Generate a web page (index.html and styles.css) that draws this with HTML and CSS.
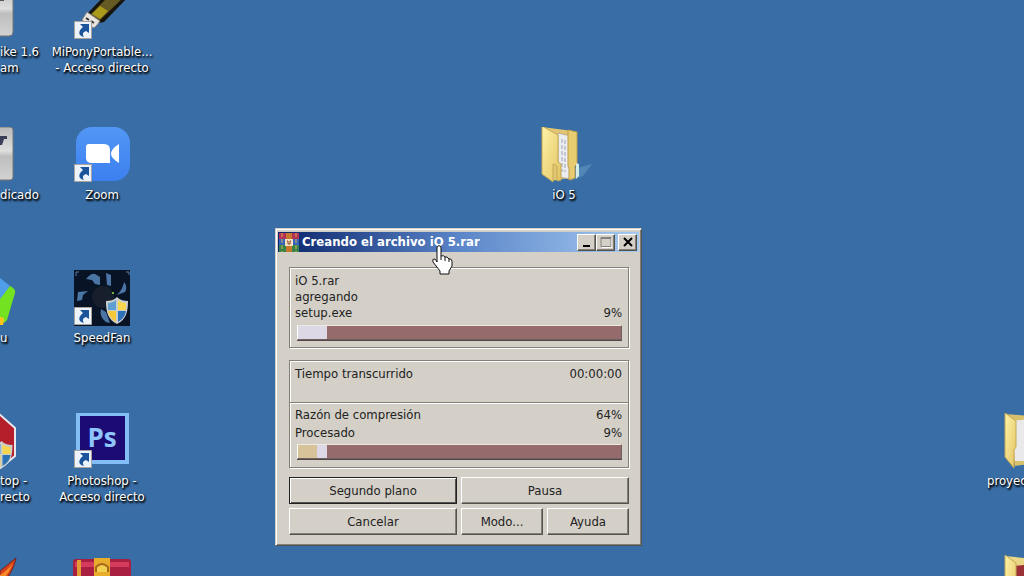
FILE: index.html
```html
<!DOCTYPE html>
<html lang="es">
<head>
    <meta charset="UTF-8">
    <title>Creando el archivo iO 5.rar</title>
    <link rel="stylesheet" href="styles.css">
</head>
<body>
    <svg class="defs" aria-hidden="true">
        <defs>
            <linearGradient id="silver" x1="0" y1="0" x2="0" y2="1">
                <stop offset="0" stop-color="#b9b9b9"/>
                <stop offset="0.45" stop-color="#dedede"/>
                <stop offset="0.55" stop-color="#bebebe"/>
                <stop offset="1" stop-color="#d2d2d2"/>
            </linearGradient>
            <linearGradient id="folder" x1="0" y1="0" x2="1" y2="1">
                <stop offset="0" stop-color="#fff3a8"/>
                <stop offset="1" stop-color="#e2c362"/>
            </linearGradient>
            <linearGradient id="zoom" x1="0" y1="0" x2="0" y2="1">
                <stop offset="0" stop-color="#5397f5"/>
                <stop offset="1" stop-color="#3c7ff0"/>
            </linearGradient>
        </defs>
        <symbol id="shortcut" viewBox="0 0 18 18">
            <path d="M0.5 0.5h17v17h-17z" fill="#edf3fa" stroke="#a9a39b"/>
            <path d="M6 3h9v9l-3-2c-3 1-4 3-2 6C5 15 3 11 9 6z" fill="#1c549b"/>
        </symbol>
        <symbol id="shield" viewBox="0 0 22 27">
            <path d="M11 0c3 3 7 4 11 4c0 11-2 19-11 23C2 23 0 15 0 4c4 0 8-1 11-4z" fill="#c9ced0"/>
            <path d="M10 3v10H2V6c3 0 6-1 8-3z" fill="#5e9ed0"/>
            <path d="M12 3v10h8V6c-3 0-6-1-8-3z" fill="#f7d64f"/>
            <path d="M2 14h8v11c-5-3-7-6-8-11z" fill="#f6c93a"/>
            <path d="M20 14h-8v11c5-3 7-6 8-11z" fill="#2d72b4"/>
        </symbol>
    </svg>

    <main class="desktop">
        <div class="icon edge row-1">
            <svg width="56" height="56" viewBox="0 0 56 56">
                <path d="M0 0h38q4 0 4 4v42q0 4-4 4H0z" transform="translate(-29 2)" fill="url(#silver)" stroke="#777"/>
                <path d="M0 15h4v2H0z" fill="#555"/>
            </svg>
            <span>ike 1.6<br>am</span>
        </div>
        <div class="icon edge row-2">
            <svg width="56" height="56" viewBox="0 0 56 56">
                <path d="M-4 0H10q3 0 3 3v47q0 3-3 3H-4z" fill="url(#silver)" stroke="#777"/>
                <path d="M0 9h7v3H4l-2 6H0z" fill="#3c3d58"/>
            </svg>
            <span>dicado</span>
        </div>
        <div class="icon edge row-3">
            <svg width="56" height="56" viewBox="0 0 56 56">
                <path d="M0 8l10 8L0 30z" fill="#4e9eea"/>
                <path d="M10 16q6 3 5 7L7 50q-2 3-7 4V29z" fill="#73e321"/>
                <path d="M0 47q4 0 4 3l-1 5H0z" fill="#ffc31e"/>
            </svg>
            <span>u</span>
        </div>
        <div class="icon edge row-4">
            <svg width="56" height="56" viewBox="0 0 56 56">
                <path d="M-2 0l17 15v28L-2 57z" fill="#b51f2c" stroke="#e8e8ee" stroke-width="2"/>
                <use href="#shield" x="-10" y="28" width="23" height="27"/>
            </svg>
            <span>top -<br>recto</span>
        </div>
        <div class="icon edge row-5">
            <svg width="56" height="56" viewBox="0 0 56 56">
                <path d="M0 16Q9 9 16 3Q13 18 0 32z" fill="#d9421c" stroke="#752018"/>
                <path d="M0 20Q7 16 13 8Q9 19 0 28z" fill="#f78b28"/>
            </svg>
        </div>

        <div class="icon first row-1">
            <svg width="56" height="56" viewBox="0 0 56 56">
                <path d="M12 31L34 8h22v3L30 38l-5 1z" fill="#17150c"/>
                <path d="M16 31L36 11h16L26 36z" fill="#665a24"/>
                <path d="M18 30l8-8 8 5-8 8z" fill="#a99b19"/>
                <path d="M13 28l13 9-3 4q-2 4-6 2l-9-7z" fill="#e8e5df" stroke="#8a857e"/>
                <path d="M12 34l3 2M17 37l3 2" stroke="#333" stroke-width="2"/>
                <use href="#shortcut" x="0" y="37" width="18" height="18"/>
            </svg>
            <span>MiPonyPortable...<br>- Acceso directo</span>
        </div>
        <div class="icon first row-2">
            <svg width="56" height="56" viewBox="0 0 56 56">
                <rect x="2" y="0" width="54" height="54" rx="16" fill="url(#zoom)"/>
                <path d="M15 17h15q6 0 6 6v13H18q-6 0-6-5V20q0-3 3-3z" fill="#fff"/>
                <path d="M45 17v19q-8-5-8-9 0-5 8-10z" fill="#fff"/>
                <use href="#shortcut" x="0" y="37" width="18" height="18"/>
            </svg>
            <span>Zoom</span>
        </div>
        <div class="icon first row-3">
            <svg width="56" height="56" viewBox="0 0 56 56">
                <path d="M0 0h56v56H0z" fill="#091326"/>
                <path d="M12 9q5-6 9-5l5 3v8l-5-1-3-4zM32 3l5 2v11l-4-1zM50 12q4 5 1 10l-8 3q6-6 7-13zM4 22l10-1-5 4-1 5-5 1zM27 39q-2 8 5 13l4 1-4-11z" fill="#4b75a5"/>
                <path d="M2 6V2h3M52 2h3v3" fill="none" stroke="#587b9e"/>
                <circle cx="29" cy="27" r="11" fill="#171e2c"/>
                <circle cx="39" cy="23" r="1" fill="#9ae142"/>
                <use href="#shortcut" x="0" y="37" width="18" height="18"/>
                <use href="#shield" x="32" y="27" width="22" height="27"/>
            </svg>
            <span>SpeedFan</span>
        </div>
        <div class="icon first row-4">
            <svg width="56" height="56" viewBox="0 0 56 56">
                <path d="M4 1h49v48H4z" fill="#1b0b72" stroke="#82bdf5" stroke-width="4"/>
                <text x="28" y="34" class="ps">Ps</text>
                <use href="#shortcut" x="0" y="37" width="18" height="18"/>
            </svg>
            <span>Photoshop -<br>Acceso directo</span>
        </div>
        <div class="icon first row-5">
            <svg width="58" height="56" viewBox="0 0 58 56">
                <rect x="0" y="4" width="58" height="22" rx="3" fill="#a91f42"/>
                <path d="M2 7h54v5H2z" fill="#d43b5c"/>
                <path d="M4 5h4v18H4z" fill="#e49b36"/>
                <path d="M21 3h16v23H21z" fill="#e7ad2b"/>
                <path d="M23 17V12q6-6 12 0v5" fill="#f4ce4e" stroke="#a9691b" stroke-width="2"/>
            </svg>
        </div>

        <div class="icon middle row-2">
            <svg width="56" height="56" viewBox="0 0 56 56">
                <path d="M33 43l23-6-9 12-13 5z" fill="#6aa1c6" opacity="0.5"/>
                <path d="M6 0l31 4v46l-22 4z" fill="#e3c673"/>
                <path d="M22 6l13 3v43l-13-2z" fill="#ebecef" stroke="#bcae83"/>
                <path d="M26 12v33M29 13v32" stroke="#9fa4b5" stroke-dasharray="4 2"/>
                <path d="M32 3l9 2v32l-2 2v12l-6 2V41l-1-2z" fill="#e8cd70" stroke="#ba9b4c"/>
                <path d="M40 36l3 1v12l-3 3z" fill="#d4ece9"/>
                <path d="M6-1l16 9v27l3 2v16l-4 1V39l-4-2v18L6 47z" fill="url(#folder)" stroke="#c6a954"/>
            </svg>
            <span>iO 5</span>
        </div>
        <div class="icon last row-4">
            <svg width="56" height="56" viewBox="0 0 56 56">
                <path d="M18 1l38 3v45L28 53z" fill="#d9c06c"/>
                <path d="M25 8l31-3v43H28z" fill="#e9e9eb"/>
                <path d="M18 0l11 8v26l-2 3v18L18 44z" fill="url(#folder)" stroke="#c6a954"/>
            </svg>
            <span>proyec</span>
        </div>
        <div class="icon last row-5">
            <svg width="56" height="56" viewBox="0 0 56 56">
                <path d="M18 1l38 4v45L28 53z" fill="#ead786"/>
                <path d="M26 11l30-3v43H28z" fill="#9c3037"/>
                <path d="M18 0l11 8v26l-2 3v18L18 44z" fill="url(#folder)" stroke="#c6a954"/>
            </svg>
        </div>

        <section class="window">
            <header class="titlebar">
                <svg width="20" height="19" viewBox="0 0 20 19">
                    <path d="M0 0h20v6H0z" fill="#b42f58"/>
                    <path d="M0 6h20v6H0z" fill="#3564bc"/>
                    <path d="M0 12h20v7H0z" fill="#37844b"/>
                    <path d="M3 0v19M17 0v19" stroke="#d9b44d" stroke-dasharray="4 2"/>
                    <path d="M7 0h6v19H7z" fill="#c5772b"/>
                    <path d="M6 6h8v7H6z" fill="#f4dfc1"/>
                    <path d="M8 8h1v3h2V8h1" fill="none" stroke="#884722"/>
                </svg>
                <h1>Creando el archivo iO 5.rar</h1>
                <div class="window-buttons">
                    <button aria-label="Minimizar"><svg width="12" height="12"><path d="M2 9h7v2H2z"/></svg></button>
                    <button aria-label="Maximizar" disabled><svg width="12" height="12"><path d="M1 1.5h10v9H1zM1 2.5h10" fill="none" stroke="#85827d"/><path d="M2 11.5h10V2" fill="none" stroke="#fff"/></svg></button>
                    <button aria-label="Cerrar"><svg width="12" height="12"><path d="M2 2l8 8M10 2l-8 8" stroke="#000" stroke-width="2"/></svg></button>
                </div>
            </header>

            <div class="content">
                <div class="group">
                    <p>iO 5.rar</p>
                    <p>agregando</p>
                    <p class="line"><span>setup.exe</span><span>9%</span></p>
                    <div class="bar" role="progressbar" aria-label="setup.exe" aria-valuenow="9">
                        <span class="done" style="width: 9%"></span>
                    </div>
                </div>

                <div class="group totals">
                    <div class="time">
                        <p class="line"><span>Tiempo transcurrido</span><span>00:00:00</span></p>
                    </div>
                    <div class="ratio">
                        <p class="line"><span>Razón de compresión</span><span>64%</span></p>
                        <p class="line"><span>Procesado</span><span>9%</span></p>
                        <div class="bar" role="progressbar" aria-label="Procesado" aria-valuenow="9">
                            <span class="packed" style="width: 6%"></span>
                            <span class="done" style="width: 3%"></span>
                        </div>
                    </div>
                </div>

                <div class="actions">
                    <button class="wide default">Segundo plano</button>
                    <button class="wide">Pausa</button>
                    <button class="wide">Cancelar</button>
                    <button>Modo...</button>
                    <button>Ayuda</button>
                </div>
            </div>
        </section>

        <svg class="pointer" width="21" height="30" viewBox="0 0 21 30" aria-hidden="true">
            <path d="M5 2q2-3 4 0v9q3-1 4 1 2-1 4 2 2-1 3 2v5l-3 5v3H8v-3L1 17q-1-3 1-3 2 0 3 3z" fill="#fff" stroke="#111"/>
            <path d="M9 11v4M13 12v4M17 14v3" stroke="#111"/>
        </svg>
    </main>
</body>
</html>
```

FILE: styles.css
```css
body {
    margin: 0;
    font-family: "DejaVu Sans Condensed", "Noto Sans", sans-serif;
    font-size: 13px;
    line-height: 16px;
    color: #222;
}
.defs {
    position: absolute;
    width: 0;
    height: 0;
}
.desktop {
    position: relative;
    height: 100vh;
    overflow: hidden;
    background: #396da5;
}

/* desktop icons */
.icon {
    position: absolute;
    width: 112px;
    display: flex;
    flex-direction: column;
    align-items: center;
    gap: 4px;
    color: #fff;
    text-align: center;
    text-shadow: 1px 1px 2px #000, 1px 2px 2px #000;
    white-space: nowrap;
}
.edge {
    left: 0;
    align-items: flex-start;
    text-align: left;
}
.first { left: 46px; }
.middle { left: 508px; }
.last {
    left: 987px;
    align-items: flex-start;
}
.row-1 { top: -16px; }
.row-2 { top: 127px; }
.row-3 { top: 270px; }
.row-4 { top: 413px; }
.row-5 { top: 555px; }
.ps {
    font-family: "Open Sans", sans-serif;
    font-size: 26px;
    font-weight: bold;
    text-anchor: middle;
    fill: #8fc5fb;
    text-shadow: none;
}

/* window */
.window {
    position: absolute;
    left: 275px;
    top: 228px;
    width: 367px;
    box-sizing: border-box;
    padding: 2px;
    background: #d4d0c8;
    border: 1px solid;
    border-color: #d4d0c8 #55534f #55534f #d4d0c8;
    box-shadow: inset 1px 1px #fff, inset -1px -1px #848078;
}
.titlebar {
    display: flex;
    align-items: center;
    gap: 3px;
    height: 20px;
    margin-top: 1px;
    padding: 0 2px 0 1px;
    background: linear-gradient(to right, #0a246a, #5a85c8 50%, #a6caf0);
}
.titlebar h1 {
    flex: 1;
    margin: 0;
    font-size: 13px;
    color: #fff;
}
.window-buttons {
    display: flex;
}
button {
    font: inherit;
    color: #222;
    background: #d4d0c8;
    border: 1px solid;
    border-color: #fff #55534f #55534f #fff;
    box-shadow: inset -1px -1px #848078;
    border-radius: 0;
    padding: 0;
}
.window-buttons button {
    display: flex;
    align-items: center;
    justify-content: center;
    width: 19px;
    height: 17px;
}
.window-buttons button:last-child {
    margin-left: 3px;
}
.content {
    display: flex;
    flex-direction: column;
    gap: 12px;
    padding: 15px 10px 8px 11px;
}
.group {
    padding: 5px 6px 6px 5px;
    border: 1px solid #848078;
    box-shadow: 1px 1px #fff, inset 1px 1px #fff;
}
.group p {
    margin: 0;
}
.line {
    display: flex;
    justify-content: space-between;
}
.totals {
    padding: 0;
}
.time {
    padding: 5px 6px 20px 5px;
    border-bottom: 1px solid #848078;
    box-shadow: 0 1px #fff;
}
.ratio {
    display: flex;
    flex-direction: column;
    gap: 2px;
    padding: 4px 6px 7px 5px;
}
.bar {
    display: flex;
    height: 13px;
    margin: 4px 0 1px 2px;
    background: #966b6b;
    border: 1px solid;
    border-color: #ede8e0 #716060 #716060 #fff;
    box-shadow: 0 1px #514848;
}
.ratio .bar {
    margin-top: 1px;
}
.done {
    background: #dcd8e6;
}
.packed {
    background: #d6c399;
}
.actions {
    display: grid;
    grid-template-columns: repeat(4, 1fr);
    gap: 4px;
    margin-top: -3px;
}
.actions button {
    height: 27px;
}
.actions .wide {
    grid-column: span 2;
}
.actions .default {
    border-color: #222;
    box-shadow: inset 1px 1px #fff, inset -1px -1px #55534f;
}

.pointer {
    position: absolute;
    left: 432px;
    top: 245px;
}
```
